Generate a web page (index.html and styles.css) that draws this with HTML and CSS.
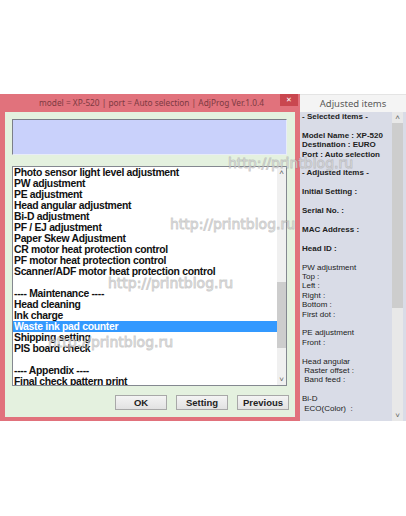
FILE: index.html
```html
<!DOCTYPE html>
<html>
<head>
  <title>AdjProg</title>
  <link rel="stylesheet" href="styles.css">
</head>
<body>

  <div class="screen">
    <div class="windows">

      <!-- Main dialog -->
      <div class="dialog">
        <div class="titlebar">
          <span class="title">model = XP-520 | port = Auto selection | AdjProg Ver.1.0.4</span>
          <span class="close">&#x2715;</span>
        </div>
        <div class="dialog-body">
          <div class="info-box"></div>

          <div class="listbox">
            <ul class="items">
              <li>Photo sensor light level adjustment</li>
              <li>PW adjustment</li>
              <li>PE adjustment</li>
              <li>Head angular adjustment</li>
              <li>Bi-D adjustment</li>
              <li>PF / EJ adjustment</li>
              <li>Paper Skew Adjustment</li>
              <li>CR motor heat protection control</li>
              <li>PF motor heat protection control</li>
              <li>Scanner/ADF motor heat protection control</li>
              <li>&nbsp;</li>
              <li>---- Maintenance ----</li>
              <li>Head cleaning</li>
              <li>Ink charge</li>
              <li class="selected">Waste ink pad counter</li>
              <li>Shipping setting</li>
              <li>PIS board check</li>
              <li>&nbsp;</li>
              <li>---- Appendix ----</li>
              <li>Final check pattern print</li>
            </ul>
            <div class="vscroll">
              <span class="arrow">&#x2C4;</span>
              <div class="track"><div class="thumb list-thumb"></div></div>
              <span class="arrow">&#x2C5;</span>
            </div>
          </div>

          <div class="buttons">
            <button class="btn">OK</button>
            <button class="btn">Setting</button>
            <button class="btn">Previous</button>
          </div>
        </div>
      </div>

      <!-- Adjusted items panel -->
      <div class="panel">
        <div class="panel-head">Adjusted items</div>
        <div class="panel-body">
          <div class="panel-text">
            <div class="b">- Selected items -</div>
            <div>&nbsp;</div>
            <div class="b">Model Name : XP-520</div>
            <div class="b">Destination : EURO</div>
            <div class="b">Port : Auto selection</div>
            <div>&nbsp;</div>
            <div class="b">- Adjusted items -</div>
            <div>&nbsp;</div>
            <div class="b">Initial Setting :</div>
            <div>&nbsp;</div>
            <div class="b">Serial No. :</div>
            <div>&nbsp;</div>
            <div class="b">MAC Address :</div>
            <div>&nbsp;</div>
            <div class="b">Head ID :</div>
            <div>&nbsp;</div>
            <div>PW adjustment</div>
            <div>Top :</div>
            <div>Left :</div>
            <div>Right :</div>
            <div>Bottom :</div>
            <div>First dot :</div>
            <div>&nbsp;</div>
            <div>PE adjustment</div>
            <div>Front :</div>
            <div>&nbsp;</div>
            <div>Head angular</div>
            <div>&nbsp;Raster offset :</div>
            <div>&nbsp;Band feed :</div>
            <div>&nbsp;</div>
            <div>Bi-D</div>
            <div>&nbsp;ECO(Color)&nbsp; :</div>
          </div>
          <div class="vscroll panel-scroll">
            <span class="arrow">&#x2C4;</span>
            <div class="track"><div class="thumb panel-thumb"></div></div>
            <span class="arrow">&#x2C5;</span>
          </div>
        </div>
      </div>

    </div>

    <!-- watermarks over the screenshot -->
    <span class="mark m1">http://printblog.ru</span>
    <span class="mark m2">http://printblog.ru</span>
    <span class="mark m3">http://printblog.ru</span>
    <span class="mark m4">http://printblog.ru</span>
  </div>

</body>
</html>
```

FILE: styles.css
```css
body {
  margin: 0;
  background: #ffffff;
  font-family: "Liberation Sans", Arial, sans-serif;
}

.screen {
  position: relative;
  width: 406px;
  height: 516px;
  padding-top: 94px;
  box-sizing: border-box;
}

.windows {
  display: flex;
  height: 327px;
}

/* Main dialog */
.dialog {
  width: 300px;
  background: #e1727c;
  padding: 0 5px 4px 5px;
  box-sizing: border-box;
  display: flex;
  flex-direction: column;
}

.titlebar {
  height: 18px;
  display: flex;
  align-items: flex-start;
  padding-left: 18px;
}

.title {
  flex: 1;
  text-align: center;
  font-family: "Noto Sans", sans-serif;
  font-size: 8.3px;
  line-height: 18px;
  color: #7d3a42;
  white-space: nowrap;
}

.close {
  width: 18px;
  height: 12px;
  margin-right: -3px;
  background: #c9474f;
  color: #ffffff;
  font-size: 7px;
  line-height: 12px;
  text-align: center;
}

.dialog-body {
  flex: 1;
  background: #e4f1df;
  padding: 7px 8px 0 7px;
  display: flex;
  flex-direction: column;
}

.info-box {
  height: 36px;
  background: #c9d1fb;
  border-top: 1px solid #7c7f88;
  border-left: 1px solid #7c7f88;
  border-right: 1px solid #e8ecf8;
  border-bottom: 1px solid #e8ecf8;
  box-sizing: border-box;
}

.listbox {
  margin-top: 11px;
  height: 220px;
  background: #ffffff;
  border: 1px solid #848890;
  box-sizing: border-box;
  display: flex;
  overflow: hidden;
}

.items {
  flex: 1;
  list-style: none;
  margin: 0;
  padding: 0;
  overflow: hidden;
}

.items li {
  height: 11px;
  line-height: 11px;
  padding-left: 1px;
  font-size: 10.4px;
  font-weight: bold;
  letter-spacing: -0.3px;
  color: #111111;
  white-space: nowrap;
}

.items li.selected {
  background: #3399ff;
  color: #ffffff;
}

/* Scrollbars */
.vscroll {
  width: 9px;
  display: flex;
  flex-direction: column;
  background: #f0f0f0;
}

.arrow {
  height: 11px;
  font-size: 8px;
  line-height: 11px;
  text-align: center;
  color: #606060;
}

.track {
  flex: 1;
  position: relative;
}

.thumb {
  position: absolute;
  left: 0;
  right: 0;
  background: #cdcdcd;
}

.list-thumb {
  top: 104px;
  height: 66px;
}

.buttons {
  display: flex;
  justify-content: flex-end;
  gap: 9px;
  margin-top: 9px;
  margin-right: -2px;
}

.btn {
  width: 52px;
  height: 15px;
  padding: 0;
  border: 1px solid #a8a8a8;
  border-radius: 0;
  background: linear-gradient(#f4f4f4, #e2e2e2);
  font-family: "Liberation Sans", Arial, sans-serif;
  font-size: 9.5px;
  font-weight: bold;
  color: #222222;
}

/* Right panel */
.panel {
  flex: 1;
  display: flex;
  flex-direction: column;
}

.panel-head {
  height: 18px;
  background: #f4f4f4;
  border-top: 1px solid #e4e4e4;
  box-sizing: border-box;
  text-align: center;
  font-family: "Noto Sans", sans-serif;
  font-size: 9.5px;
  line-height: 17px;
  color: #5a5a5a;
}

.panel-body {
  flex: 1;
  display: flex;
  background: #d9dce7;
  overflow: hidden;
}

.panel-text {
  flex: 1;
  padding: 0 0 0 2px;
  font-size: 8px;
  line-height: 9.4px;
  color: #222222;
  white-space: nowrap;
  overflow: hidden;
}

.panel-text .b {
  font-weight: bold;
}

.panel-scroll {
  width: 11px;
  margin-right: 3px;
  background: #e8e8e8;
}

.panel-thumb {
  top: 0;
  height: 185px;
}

/* Watermarks */
.mark {
  position: absolute;
  font-family: "DejaVu Sans", sans-serif;
  font-size: 14px;
  color: rgba(255, 255, 255, 0.75);
  -webkit-text-stroke: 1px rgba(130, 130, 130, 0.4);
  white-space: nowrap;
}

.m1 { left: 228px; top: 155px; }
.m2 { left: 170px; top: 216px; }
.m3 { left: 108px; top: 275px; }
.m4 { left: 48px; top: 334px; }
```
